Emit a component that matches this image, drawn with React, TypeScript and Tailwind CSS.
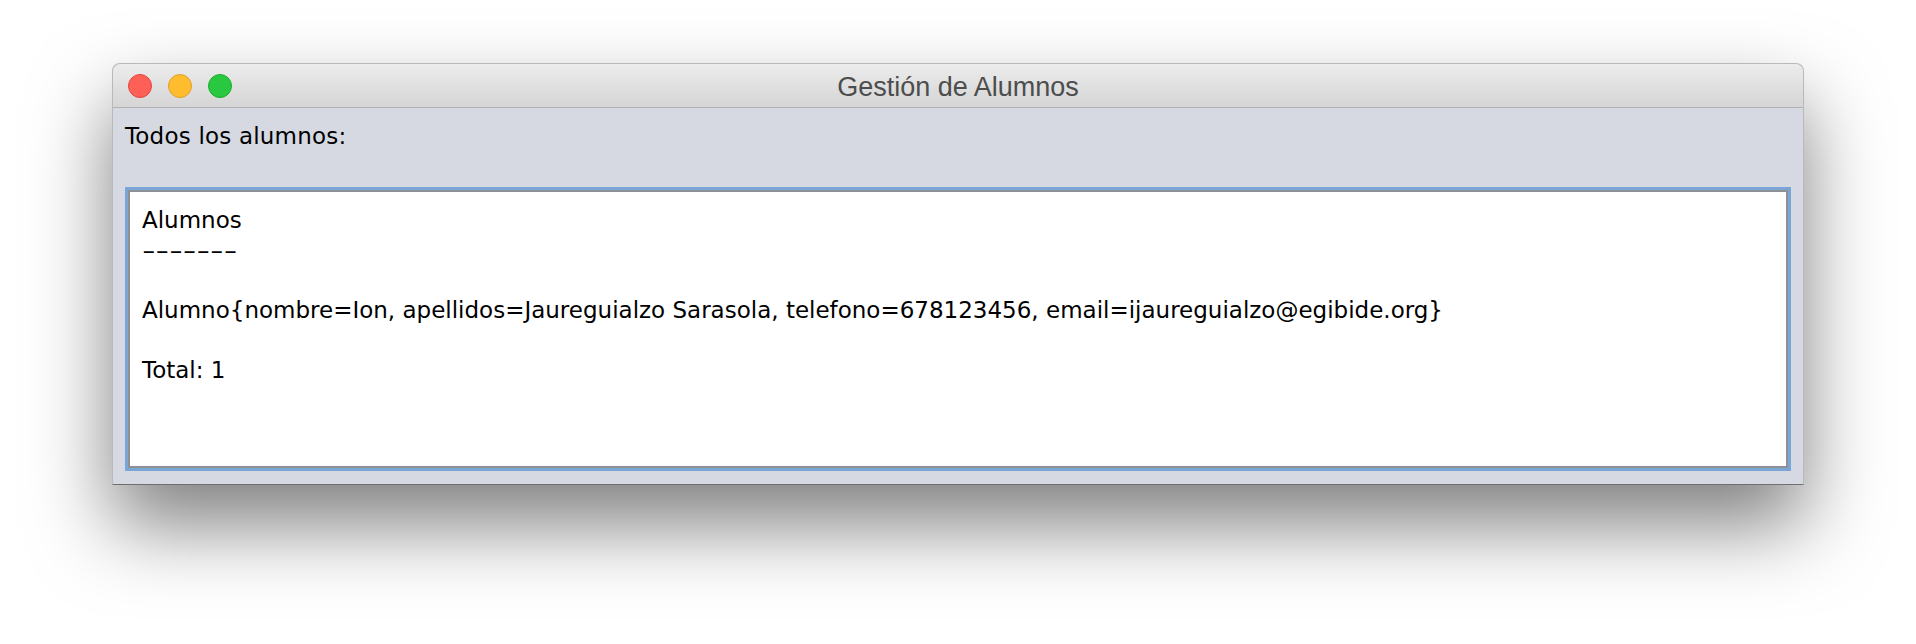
import React from "react";

const lines = [
  "Alumnos",
  "-------",
  "",
  "Alumno{nombre=Ion, apellidos=Jaureguialzo Sarasola, telefono=678123456, email=ijaureguialzo@egibide.org}",
  "",
  "Total: 1",
];

const TrafficLights: React.FC = () => (
  <div className="flex items-center gap-4">
    <span className="block w-6 h-6 rounded-full bg-[#fe5f57] border border-[#e2463f]" />
    <span className="block w-6 h-6 rounded-full bg-[#febc2e] border border-[#dfa023]" />
    <span className="block w-6 h-6 rounded-full bg-[#28c840] border border-[#1dad2b]" />
  </div>
);

const App: React.FC = () => {
  return (
    <div className="w-[1916px] h-[644px] bg-white pt-[63px] pl-[112px] overflow-hidden">
      <div className="w-[1692px] flex flex-col rounded-t-[8px] border border-[#b9b9b9] border-b-[#6f6f6f] shadow-[0_40px_80px_rgba(0,0,0,0.5)] bg-[#d6d9e1]">
        {/* title bar */}
        <div className="relative h-[44px] flex items-center pl-[15px] rounded-t-[8px] bg-gradient-to-b from-[#ececec] to-[#d5d5d5] border-b border-[#b1b1b1]">
          <TrafficLights />
          <div
            className="absolute inset-0 pt-[3px] flex items-center justify-center text-[27px] text-[#4d4d4d] pointer-events-none"
            style={{ fontFamily: '"Liberation Sans", Arial, sans-serif' }}>
            Gestión de Alumnos
          </div>
        </div>

        {/* content */}
        <div
          className="flex flex-col pt-[13px] px-[12px] pb-[13px] text-[23px] leading-[30px] text-black"
          style={{ fontFamily: '"DejaVu Sans", "Noto Sans", sans-serif' }}>
          <div className="h-[30px] tracking-[0.2px]">Todos los alumnos:</div>
          <div className="mt-[36px] h-[284px] border-[3px] border-[#79a6d7]">
            <div className="h-full bg-white border-2 border-[#8f9096] px-[12px] pt-[13px]">
              {lines.map((l, i) => (
                <div key={i} className="h-[30px] whitespace-pre">
                  {l === "-------" ? (
                    <span className="inline-block origin-left scale-x-[1.64]">{l}</span>
                  ) : (
                    l
                  )}
                </div>
              ))}
            </div>
          </div>
        </div>
      </div>
    </div>
  );
};

export default App;
